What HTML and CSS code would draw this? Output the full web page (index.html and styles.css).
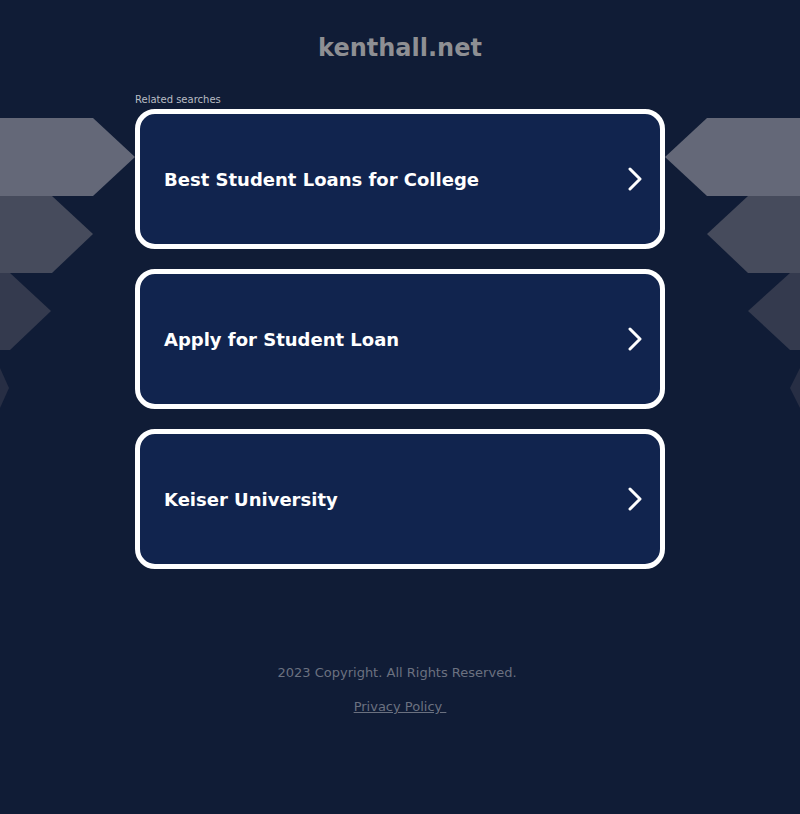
FILE: index.html
```html
<!DOCTYPE html>
<html lang="en">

<head>
	<meta charset="UTF-8">
	<meta name="viewport"
				content="width=device-width, initial-scale=1.0">
	<title>kenthall.net</title>
	<link rel="stylesheet" href="styles.css">
</head>

<body>
	<!-- arrow decoration behind the link list -->
	<svg class="arrows"
			 width="800"
			 height="440"
			 viewBox="0 0 800 440">
		<polygon points="0,118 93,118 135,157 93,196 0,196" fill="#646878" />
		<polygon points="0,196 52,196 93,234 52,273 0,273" fill="#464b5c" />
		<polygon points="0,273 10,273 51,311 10,350 0,350" fill="#343a4e" />
		<polygon points="0,368 9,388 0,408" fill="#272e44" />
		<polygon points="800,118 707,118 665,157 707,196 800,196" fill="#646878" />
		<polygon points="800,196 748,196 707,234 748,273 800,273" fill="#464b5c" />
		<polygon points="800,273 790,273 748,311 790,350 800,350" fill="#343a4e" />
		<polygon points="800,368 790,388 800,408" fill="#272e44" />
	</svg>

	<div class="page">
		<h1 class="domain">kenthall.net</h1>

		<div class="related">
			<p class="related-title">Related searches</p>
			<ul class="links">
				<li>
					<a href="#" class="link">
						<span>Best Student Loans for College</span>
						<svg class="chevron" width="14" height="24" viewBox="0 0 14 24">
							<polyline points="2,2 12,12 2,22" />
						</svg>
					</a>
				</li>
				<li>
					<a href="#" class="link">
						<span>Apply for Student Loan</span>
						<svg class="chevron" width="14" height="24" viewBox="0 0 14 24">
							<polyline points="2,2 12,12 2,22" />
						</svg>
					</a>
				</li>
				<li>
					<a href="#" class="link">
						<span>Keiser University</span>
						<svg class="chevron" width="14" height="24" viewBox="0 0 14 24">
							<polyline points="2,2 12,12 2,22" />
						</svg>
					</a>
				</li>
			</ul>
		</div>

		<footer class="footer">
			<p>2023 Copyright. All Rights Reserved.</p>
			<a href="#" class="privacy">Privacy Policy&nbsp;</a>
		</footer>
	</div>
</body>

</html>
```

FILE: styles.css
```css
* {
	box-sizing: border-box;
}

body {
	background-color: #101c36;
	font-family: "DejaVu Sans", sans-serif;
	margin: 0;
	min-height: 100vh;
	position: relative;
}

.arrows {
	position: absolute;
	top: 0;
	left: 0;
	z-index: 0;
}

.page {
	position: relative;
	z-index: 1;
	display: flex;
	flex-direction: column;
	align-items: center;
}

.domain {
	color: #8e8f93;
	font-size: 24px;
	font-weight: bold;
	margin: 0;
	padding-top: 33px;
	line-height: 30px;
}

.related {
	width: 530px;
	margin-top: 31px;
}

.related-title {
	color: #b9bcc4;
	font-size: 10px;
	margin: 0 0 3px;
	line-height: 12px;
}

.links {
	list-style-type: none;
	margin: 0;
	padding: 0;
	display: flex;
	flex-direction: column;
	gap: 20px;
}

.link {
	display: flex;
	align-items: center;
	justify-content: space-between;
	height: 140px;
	padding: 0 18px 0 24px;
	background-color: #11244e;
	border: 5px solid #fff;
	border-radius: 20px;
	color: #fff;
	font-size: 18px;
	font-weight: bold;
	text-decoration: none;
}

.chevron polyline {
	fill: none;
	stroke: #fff;
	stroke-width: 3;
	stroke-linecap: round;
	stroke-linejoin: round;
}

.footer {
	margin-top: 96px;
	text-align: center;
	font-size: 13px;
	color: #6b7180;
}

.footer p {
	margin: 0 6px 19px 0;
}

.privacy {
	color: #6b7180;
}
```
